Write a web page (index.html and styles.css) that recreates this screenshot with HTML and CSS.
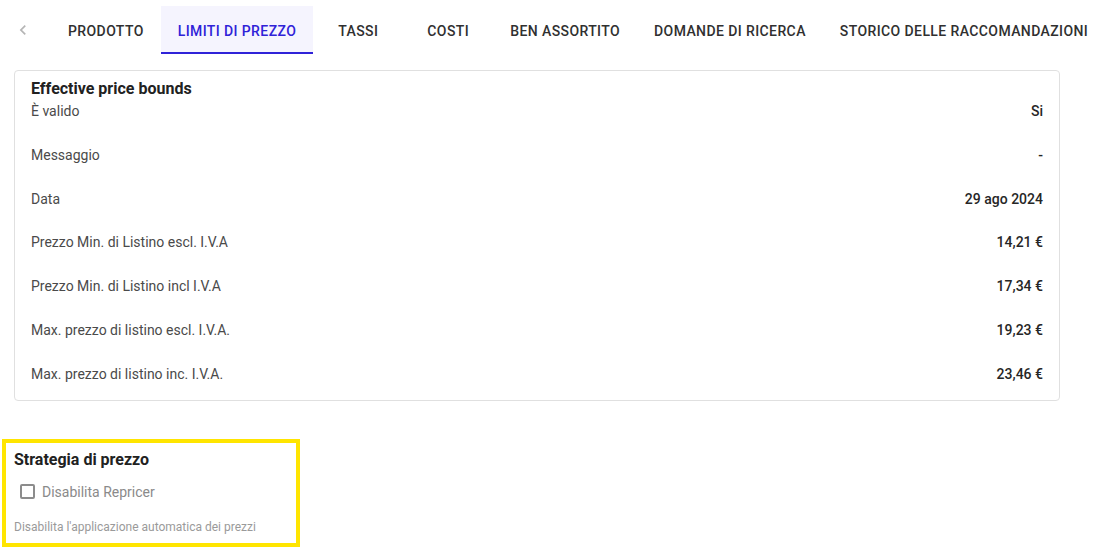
FILE: index.html
```html
<!DOCTYPE html>
<html lang="it">
<head>
  <meta charset="UTF-8">
  <meta name="viewport" content="width=device-width, initial-scale=1">
  <title>Limiti di prezzo</title>
  <link rel="stylesheet" href="styles.css">
</head>
<body>
  <nav class="tabs">
    <button class="tab-scroll" aria-label="indietro">
      <svg width="20" height="20" viewBox="0 0 24 24"><path d="M15.41 7.41 14 6l-6 6 6 6 1.41-1.41L10.83 12z" fill="#b5b5b5"/></svg>
    </button>
    <div class="tab-list">
      <div class="tab">Prodotto</div>
      <div class="tab active">Limiti di prezzo</div>
      <div class="tab">Tassi</div>
      <div class="tab">Costi</div>
      <div class="tab">Ben assortito</div>
      <div class="tab">Domande di ricerca</div>
      <div class="tab">Storico delle raccomandazioni</div>
    </div>
  </nav>

  <section class="card">
    <h2>Effective price bounds</h2>
    <div class="row"><span>È valido</span><b>Si</b></div>
    <div class="row"><span>Messaggio</span><b>-</b></div>
    <div class="row"><span>Data</span><b>29 ago 2024</b></div>
    <div class="row"><span>Prezzo Min. di Listino escl. I.V.A</span><b>14,21 €</b></div>
    <div class="row"><span>Prezzo Min. di Listino incl I.V.A</span><b>17,34 €</b></div>
    <div class="row"><span>Max. prezzo di listino escl. I.V.A.</span><b>19,23 €</b></div>
    <div class="row"><span>Max. prezzo di listino inc. I.V.A.</span><b>23,46 €</b></div>
  </section>

  <section class="strategia">
    <h3>Strategia di prezzo</h3>
    <label class="check">
      <span class="box"></span>
      Disabilita Repricer
    </label>
    <p class="helper">Disabilita l'applicazione automatica dei prezzi</p>
  </section>
</body>
</html>
```

FILE: styles.css
```css
* {
  box-sizing: border-box;
}

body {
  margin: 0;
  font-family: Roboto, 'Liberation Sans', sans-serif;
  background: #fff;
  color: #212121;
  overflow: hidden;
}

.tabs {
  display: flex;
  align-items: center;
  height: 48px;
  margin-top: 6px;
  overflow: hidden;
}

.tab-scroll {
  flex-shrink: 0;
  width: 40px;
  height: 48px;
  margin-left: 3px;
  margin-right: 8px;
  border: none;
  background: none;
  padding: 0;
  display: flex;
  align-items: center;
  justify-content: center;
}

.tab-list {
  display: flex;
  flex-shrink: 0;
  white-space: nowrap;
}

.tab {
  min-width: 90px;
  height: 48px;
  padding: 2px 17px 0;
  display: flex;
  align-items: center;
  justify-content: center;
  font-size: 14px;
  font-weight: 500;
  letter-spacing: 0.4px;
  text-transform: uppercase;
  color: #303030;
}

.tab.active {
  background: #f5f4fe;
  color: #2f22d8;
  border-bottom: 2px solid #2f22d8;
  padding-top: 4px;
}

.card {
  width: 1046px;
  margin: 16px 0 0 14px;
  border: 1px solid #e0e0e0;
  border-radius: 4px;
  padding: 7px 16px 16px;
}

.card h2 {
  margin: 0;
  font-size: 16px;
  line-height: 22px;
  font-weight: 700;
  color: #212121;
}

.row {
  display: flex;
  justify-content: space-between;
  font-size: 14px;
  line-height: 20px;
  margin-top: 23.8px;
  color: #4a4a4a;
}

.card h2 + .row {
  margin-top: 1px;
}

.row b {
  font-weight: 500;
  color: #262626;
}

.strategia {
  width: 298px;
  margin: 38px 0 0 2px;
  border: 4px solid #ffe500;
  padding: 6px 8px 8px;
}

.strategia h3 {
  margin: 0;
  font-size: 16px;
  line-height: 22px;
  font-weight: 700;
  color: #212121;
}

.check {
  display: flex;
  align-items: center;
  gap: 7px;
  margin: 11px 0 0 6px;
  font-size: 14px;
  color: #8a8a8a;
  line-height: 20px;
}

.box {
  width: 15px;
  height: 15px;
  border: 2px solid #8c8c8c;
  border-radius: 2px;
}

.helper {
  margin: 17px 0 0;
  font-size: 12px;
  line-height: 16px;
  color: #9a9a9a;
}
```
